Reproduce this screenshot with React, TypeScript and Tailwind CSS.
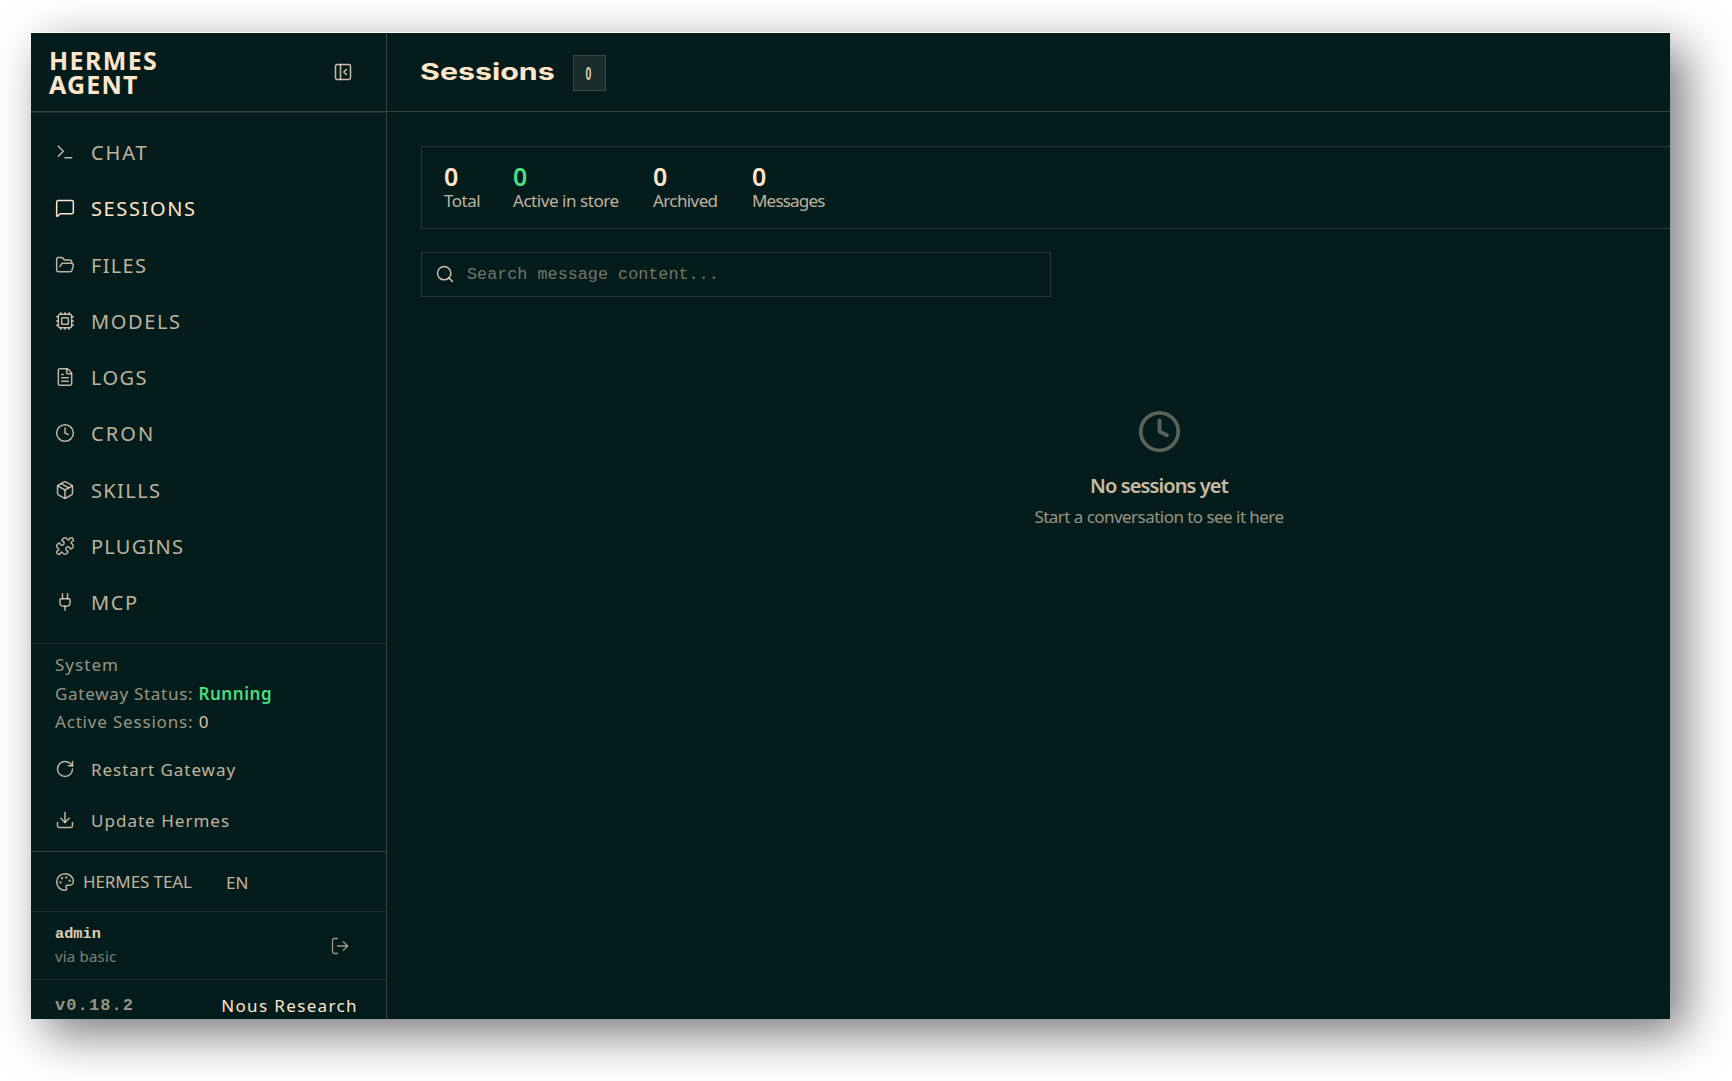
import type { ReactNode } from "react";
import {
  Clock,
  Cpu,
  Download,
  FileText,
  FolderOpen,
  LogOut,
  MessageSquare,
  Package,
  Palette,
  PanelLeftClose,
  Plug,
  Puzzle,
  RotateCw,
  Search,
  Terminal,
  type LucideIcon,
} from "lucide-react";

type NavItem = { label: string; icon: LucideIcon; tracking: string; active?: boolean };

const NAV: NavItem[] = [
  { label: "CHAT", icon: Terminal, tracking: "tracking-[1.9px]" },
  { label: "SESSIONS", icon: MessageSquare, tracking: "tracking-[1.62px]", active: true },
  { label: "FILES", icon: FolderOpen, tracking: "tracking-[1.31px]" },
  { label: "MODELS", icon: Cpu, tracking: "tracking-[1.61px]" },
  { label: "LOGS", icon: FileText, tracking: "tracking-[1.41px]" },
  { label: "CRON", icon: Clock, tracking: "tracking-[2.1px]" },
  { label: "SKILLS", icon: Package, tracking: "tracking-[1.38px]" },
  { label: "PLUGINS", icon: Puzzle, tracking: "tracking-[1.24px]" },
  { label: "MCP", icon: Plug, tracking: "tracking-[1.61px]" },
];

const STATS = [
  { label: "Total", width: "w-[69px]", tracking: "tracking-[-0.5px]" },
  { label: "Active in store", width: "w-[140px]", tracking: "tracking-[-0.45px]", green: true },
  { label: "Archived", width: "w-[99px]", tracking: "tracking-[-0.6px]" },
  { label: "Messages", width: "w-[99px]", tracking: "tracking-[-0.8px]" },
];

function Action({ icon: Icon, children, tracking }: { icon: LucideIcon; children: ReactNode; tracking: string }) {
  return (
    <button className="flex h-[51px] items-center gap-[16px] pl-[24px] text-[17px] text-[#ffe6cb]/75">
      <Icon size={20} strokeWidth={1.8} />
      <span className={`pt-[2px] ${tracking}`}>{children}</span>
    </button>
  );
}

function Sidebar() {
  return (
    <aside className="flex w-[356px] shrink-0 flex-col border-r border-[#36443f]">
      <div className="flex h-[79px] shrink-0 items-center justify-between border-b border-[#36443f] pr-[33px] pl-[18px]">
        <div className="text-[25px] leading-[24px] font-bold">
          <div className="tracking-[1.4px]">HERMES</div>
          <div className="tracking-[1.19px]">AGENT</div>
        </div>
        <PanelLeftClose size={20} strokeWidth={1.8} className="text-[#ffe6cb]/80" />
      </div>

      <nav className="flex h-[531px] shrink-0 flex-col border-t border-[#1d302e] pt-[11px]">
        {NAV.map(({ label, icon: Icon, tracking, active }) => (
          <a
            key={label}
            className={`flex h-[56.25px] shrink-0 items-center gap-[16px] pl-[24px] text-[20px] ${active ? "text-[#ffe6cb]" : "text-[#ffe6cb]/75"}`}
          >
            <Icon size={20} strokeWidth={1.8} className="shrink-0" />
            <span className={`pt-[2px] ${tracking}`}>{label}</span>
          </a>
        ))}
      </nav>

      <section className="flex h-[208px] shrink-0 flex-col border-t border-[#1d302e] pt-[7px]">
        <div className="pl-[24px] text-[17px] leading-[28.5px] text-[#ffe6cb]/60">
          <div className="tracking-[1.03px]">System</div>
          <div>
            <span className="tracking-[0.71px]">Gateway Status: </span>
            <span className="font-semibold tracking-[0.56px] text-[#4ade80]">Running</span>
          </div>
          <div>
            <span className="tracking-[0.82px]">Active Sessions: </span>
            <span className="text-[#ffe6cb]/85">0</span>
          </div>
        </div>
        <div className="mt-[7px] flex flex-col">
          <Action icon={RotateCw} tracking="tracking-[0.98px]">Restart Gateway</Action>
          <Action icon={Download} tracking="tracking-[1.02px]">Update Hermes</Action>
        </div>
      </section>

      <div className="flex h-[60px] shrink-0 items-center border-t border-[#36443f] pl-[24px] text-[17px] text-[#ffe6cb]/75">
        <Palette size={20} strokeWidth={1.8} />
        <span className="ml-[8px] w-[143px] tracking-[-0.1px]">HERMES TEAL</span>
        <span className="pt-[2px]">EN</span>
      </div>

      <div className="flex h-[68px] shrink-0 items-center justify-between border-t border-[#1d302e] pr-[36px] pl-[24px]">
        <div>
          <div className="font-['Liberation_Mono',monospace] text-[15.3px] leading-[22px] font-bold text-[#ffe6cb]/90">admin</div>
          <div className="text-[15px] leading-[23px] tracking-[0.19px] text-[#ffe6cb]/50">via basic</div>
        </div>
        <LogOut size={20} strokeWidth={1.6} className="text-[#ffe6cb]/60" />
      </div>

      <div className="flex h-[52px] shrink-0 items-center justify-between border-t border-[#1d302e] pr-[28px] pl-[24px]">
        <span className="font-['Liberation_Mono',monospace] text-[17px] font-bold tracking-[1.1px] text-[#ffe6cb]/60">v0.18.2</span>
        <span className="text-[17px] tracking-[1.37px]">Nous Research</span>
      </div>
    </aside>
  );
}

function Main() {
  return (
    <main className="flex min-w-0 flex-1 flex-col">
      <header className="flex h-[79px] shrink-0 items-center border-b border-[#36443f] pl-[33px]">
        <h1 className="w-[153px] origin-left scale-x-[1.32] font-['Inter',sans-serif] text-[23px] font-bold">Sessions</h1>
        <span className="mt-[2px] flex h-[36px] w-[33px] items-center justify-center border border-[#3a4844] bg-[#1b2d2b] pr-[3px]">
          <span className="inline-block scale-x-[0.55] font-['Liberation_Sans',sans-serif] text-[19px] leading-none font-bold text-[#ffe6cb]/90">0</span>
        </span>
      </header>

      <div className="flex flex-col pt-[34px] pl-[34px]">
        <div className="flex h-[83px] border-y border-l border-[#2a3935] pt-[16px] pl-[22px]">
          {STATS.map(({ label, width, tracking, green }) => (
            <div key={label} className={width}>
              <div className={`text-[25px] leading-[27px] font-semibold ${green ? "text-[#4ade80]" : ""}`}>0</div>
              <div className={`text-[17px] leading-[22px] whitespace-nowrap text-[#ffe6cb]/75 ${tracking}`}>{label}</div>
            </div>
          ))}
        </div>

        <div className="mt-[23px] flex h-[45px] w-[630px] items-center border border-[#2a3935] pl-[13px]">
          <Search size={20} strokeWidth={1.8} className="mb-[2px] text-[#ffe6cb]/80" />
          <span className="ml-[12px] font-['Liberation_Mono',monospace] text-[16.8px] text-[#ffe6cb]/45">Search message content...</span>
        </div>
      </div>

      <div className="mr-[-261px] flex flex-col items-center pt-[112px]">
        <Clock size={45} strokeWidth={2} className="text-[#ffe6cb]/35" />
        <div className="mt-[18px] text-[20px] leading-[28px] font-semibold tracking-[-0.9px] text-[#ffe6cb]/80">No sessions yet</div>
        <div className="mt-[4px] text-[17px] leading-[26px] tracking-[-0.54px] text-[#ffe6cb]/60">Start a conversation to see it here</div>
      </div>
    </main>
  );
}

export default function App() {
  return (
    <div className="h-[1081px] w-[1732px] overflow-hidden bg-white pt-[32px] pl-[31px]">
      <div className="flex h-[987px] w-[1639px] overflow-hidden border-t border-white bg-[#041c1c] font-['Noto_Sans',sans-serif] text-[#ffe6cb] shadow-[15px_15px_45px_rgba(0,0,0,0.53)]">
        <Sidebar />
        <Main />
      </div>
    </div>
  );
}
